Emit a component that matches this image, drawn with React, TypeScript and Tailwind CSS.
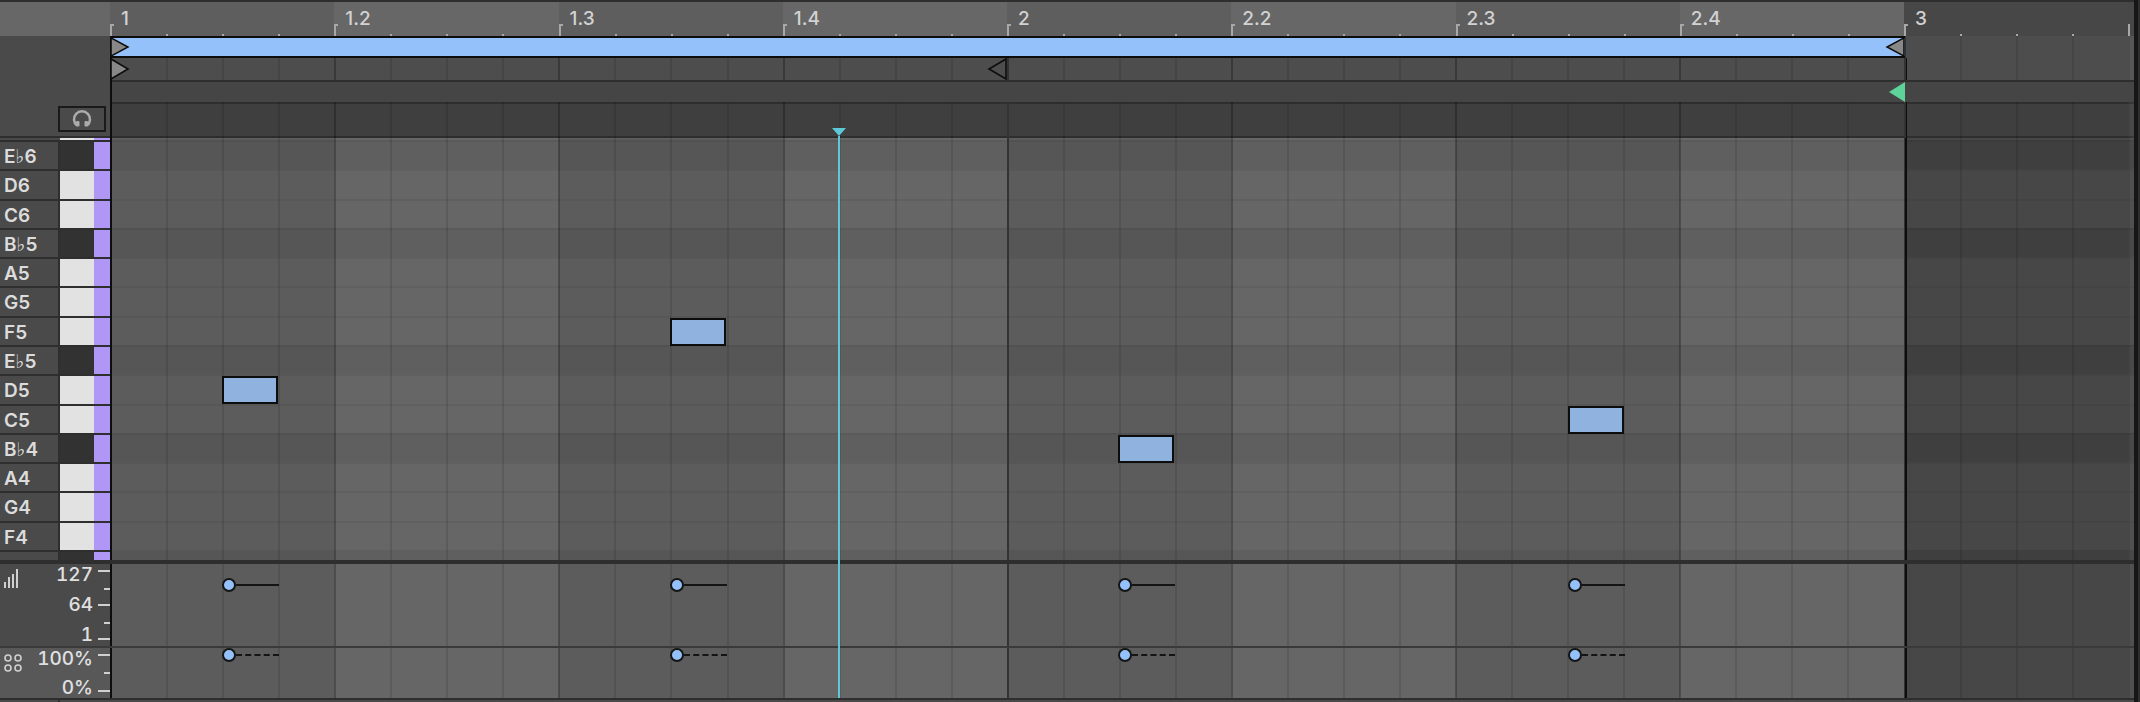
const pitches = [
  { name: "E♭6", black: true },
  { name: "D6", black: false },
  { name: "C6", black: false },
  { name: "B♭5", black: true },
  { name: "A5", black: false },
  { name: "G5", black: false },
  { name: "F5", black: false },
  { name: "E♭5", black: true },
  { name: "D5", black: false },
  { name: "C5", black: false },
  { name: "B♭4", black: true },
  { name: "A4", black: false },
  { name: "G4", black: false },
  { name: "F4", black: false },
];

// x is measured from the inside of the black edge at 112px
const notes = [
  { x: 110, row: 8 },
  { x: 558, row: 6 },
  { x: 1006, row: 10 },
  { x: 1456, row: 9 },
];

const markers = [
  { label: "1", bright: false },
  { label: "1.2", bright: true },
  { label: "1.3", bright: false },
  { label: "1.4", bright: true },
  { label: "2", bright: false },
  { label: "2.2", bright: true },
  { label: "2.3", bright: false },
  { label: "2.4", bright: true },
];

function Triangle({ dir, fill, className }: { dir: "right" | "left"; fill: string; className: string }) {
  return (
    <svg viewBox="0 0 20 22" preserveAspectRatio="none" className={className}>
      <path
        d={dir === "right" ? "M1 1 L18 11 L1 21 Z" : "M19 1 L2 11 L19 21 Z"}
        fill={fill}
        stroke="#0d0d0d"
        strokeWidth="1.6"
      />
    </svg>
  );
}

// beat shading sits under the rows, one band per 1/4 bar
function Bands({ light, dark, after, inset }: { light: string; dark: string; after: string; inset?: boolean }) {
  return (
    <div className="absolute inset-0 flex">
      {markers.map((m, i) => (
        <div
          key={m.label}
          className={`shrink-0 ${inset && i === 0 ? "w-[222.25px]" : "w-[224.25px]"} ${m.bright ? light : dark}`}
        />
      ))}
      <div className={`flex-1 ${after}`} />
    </div>
  );
}

function GridLines() {
  const cols = Array.from({ length: 37 }, (_, i) => i);
  return (
    <div className="pointer-events-none absolute inset-0 flex overflow-hidden">
      {cols.map((i) => (
        <div
          key={i}
          className={`h-full shrink-0 ${i === 0 ? "w-[54.06px]" : "w-[56.06px] border-l-2"} ${
            i === 36
              ? "border-black/10 bg-white/5"
              : i % 16 === 0
                ? "border-[#333333]"
                : i % 4 === 0
                  ? "border-black/25"
                  : "border-black/10"
          }`}
        />
      ))}
    </div>
  );
}

function Ruler() {
  return (
    <div className="flex h-[34px] shrink-0 bg-[#676767]">
      <div className="w-[110px] shrink-0" />
      <div className="relative flex flex-1">
        <Bands light="bg-[#676767]" dark="bg-[#5e5e5e]" after="bg-[#474747]" />
        {[...markers, { label: "3", bright: false }].map((m) => (
          <div key={m.label} className="relative flex w-[224.25px] shrink-0">
            {[0, 1, 2, 3].map((i) => (
              <div key={i} className="relative h-full w-[56.06px] shrink-0">
                <div
                  className={`absolute bottom-0 left-0 w-[2px] bg-[#a8a8a8] ${i === 0 ? "h-[12px]" : "h-[2px]"}`}
                />
                {i === 0 && <div className="absolute bottom-[10px] left-0 h-[2px] w-[4px] bg-[#a8a8a8]" />}
                {i === 0 && (
                  <span className="absolute top-[5px] left-[11px] text-[19px] leading-[24px] font-medium text-[#d2d2d2]">
                    {m.label}
                  </span>
                )}
              </div>
            ))}
          </div>
        ))}
        <div className="absolute right-[4px] bottom-0 h-[12px] w-[2px] bg-[#a8a8a8]" />
      </div>
    </div>
  );
}

function Header() {
  return (
    <div className="flex h-[102px] shrink-0">
      <div className="flex w-[110px] shrink-0 items-end justify-end border-b-2 border-[#2e2e2e] bg-[#4a4a4a] pr-[4px] pb-[4px]">
        <div className="flex h-[26px] w-[48px] items-center justify-center border-2 border-[#1a1a1a]">
          <svg viewBox="0 0 20 20" className="h-[20px] w-[20px]" fill="none">
            <path d="M5 16.5 A8 8 0 1 1 15 16.5" stroke="#ababab" strokeWidth="2.5" />
            <rect x="4" y="12" width="3.5" height="5.5" rx="1" fill="#ababab" />
            <rect x="12.5" y="12" width="3.5" height="5.5" rx="1" fill="#ababab" />
          </svg>
        </div>
      </div>
      <div className="relative flex-1 border-l-2 border-[#0d0d0d] bg-[#4d4d4d]">
        <div className="relative z-10 flex h-[22px] w-[1793px] items-center justify-between border-y-2 border-[#0d0d0d] bg-[#95c1fb]">
          <Triangle dir="right" fill="#888888" className="-ml-[2px] h-[20px] w-[20px]" />
          <Triangle dir="left" fill="#888888" className="h-[20px] w-[20px]" />
        </div>
        <div className="relative z-10 flex h-[22px] items-center">
          <Triangle dir="right" fill="#888888" className="-ml-[2px] h-[22px] w-[20px]" />
          <Triangle dir="left" fill="none" className="ml-[857px] h-[22px] w-[20px]" />
        </div>
        <div className="relative z-10 flex h-[22px] items-center border-t-2 border-[#2e2e2e] bg-[#454545] pl-[1777px]">
          <svg viewBox="0 0 16 20" className="h-[20px] w-[16px]">
            <path d="M0 10 L16 0 L16 20 Z" fill="#5dd39a" />
          </svg>
        </div>
        <div className="h-[36px] border-y-2 border-[#2e2e2e] bg-[#3f3f3f]" />
        <div className="absolute top-[22px] bottom-0 left-[1793px] w-[2px] bg-[#0d0d0d]" />
        <GridLines />
      </div>
    </div>
  );
}

function KeyLabels() {
  return (
    <div className="flex w-[110px] shrink-0 flex-col overflow-hidden">
      <div className="flex h-[2px] shrink-0">
        <div className="w-[60px] bg-[#4a4a4a]" />
        <div className="w-[34px] bg-[#e2e2e2]" />
        <div className="w-[16px] bg-[#b197f5]" />
      </div>
      {pitches.map((p) => (
        <div key={p.name} className="flex h-[29.29px] shrink-0 border-t-2 border-[#2e2e2e]">
          <span className="w-[58px] overflow-hidden bg-[#4a4a4a] pl-[4px] text-[19px] leading-[30px] font-semibold whitespace-nowrap text-[#dcdcdc]">
            {p.name}
          </span>
          <div className="w-[2px] bg-[#2e2e2e]" />
          <div className={`w-[34px] ${p.black ? "bg-[#323232]" : "bg-[#e2e2e2]"}`} />
          <div className="w-[16px] bg-[#b197f5]" />
        </div>
      ))}
      <div className="flex flex-1 border-t-2 border-[#2e2e2e]">
        <div className="w-[58px] bg-[#4a4a4a]" />
        <div className="w-[2px] bg-[#2e2e2e]" />
        <div className="w-[34px] bg-[#323232]" />
        <div className="w-[16px] bg-[#b197f5]" />
      </div>
    </div>
  );
}

function NoteGrid() {
  return (
    <div className="relative flex flex-1 flex-col overflow-hidden border-l-2 border-[#0d0d0d]">
      <div className="relative h-[2px] shrink-0">
        <Bands inset light="bg-[#666666]" dark="bg-[#5c5c5c]" after="bg-[#474747]" />
      </div>
      {pitches.map((p) => (
        <div key={p.name} className="relative h-[29.29px] shrink-0">
          <Bands
            inset
            light={p.black ? "bg-[#5f5f5f]" : "bg-[#666666]"}
            dark={p.black ? "bg-[#565656]" : "bg-[#5c5c5c]"}
            after={p.black ? "bg-[#3f3f3f]" : "bg-[#474747]"}
          />
          <div className="absolute inset-x-0 top-0 h-[2px] bg-black/5" />
        </div>
      ))}
      <div className="relative flex-1">
        <Bands inset light="bg-[#5f5f5f]" dark="bg-[#565656]" after="bg-[#3f3f3f]" />
      </div>
      <GridLines />
      {notes.map((n) => (
        <div
          key={n.x}
          style={{ left: n.x, top: 4 + n.row * 29.29 }}
          className="absolute h-[28px] w-[56px] border-2 border-[#0d0d0d] bg-[#8fb3de]"
        />
      ))}
      <div className="absolute top-0 bottom-0 left-[1793px] w-[2px] bg-[#0d0d0d]" />
    </div>
  );
}

function Ticks({ ticks }: { ticks: { y: number; long: boolean }[] }) {
  return (
    <>
      {ticks.map((t) => (
        <div
          key={t.y}
          style={{ top: t.y }}
          className={`absolute right-0 h-[2px] bg-[#d0d0d0] ${t.long ? "w-[12px]" : "w-[6px]"}`}
        />
      ))}
    </>
  );
}

function VelocityLane({ dashed, handleY }: { dashed: boolean; handleY: number }) {
  return (
    <div className="relative h-full flex-1 overflow-hidden border-l-2 border-[#0d0d0d]">
      <Bands inset light="bg-[#666666]" dark="bg-[#5c5c5c]" after="bg-[#474747]" />
      <GridLines />
      {notes.map((n) => (
        <div
          key={n.x}
          style={{ left: n.x, top: handleY - 7 }}
          className="absolute flex h-[14px] w-[57px] items-center"
        >
          <div className="h-[14px] w-[14px] shrink-0 rounded-full border-2 border-[#141414] bg-[#95c1fb]" />
          <div className={`h-0 flex-1 border-t-2 border-[#141414] ${dashed ? "border-dashed" : ""}`} />
        </div>
      ))}
      <div className="absolute top-0 bottom-0 left-[1793px] w-[2px] bg-[#0d0d0d]" />
    </div>
  );
}

export default function App() {
  return (
    <div
      className="relative flex h-[702px] w-[2140px] flex-col overflow-hidden bg-[#2e2e2e]"
      style={{ fontFamily: '"Inter", "DejaVu Sans", sans-serif' }}
    >
      <div className="h-[2px] shrink-0 bg-[#2e2e2e]" />
      <div className="flex min-w-0 flex-1 flex-col pr-[6px]">
        <Ruler />
        <Header />
        <div className="flex h-[422px] shrink-0">
          <KeyLabels />
          <NoteGrid />
        </div>
        <div className="h-[4px] shrink-0 bg-[#2e2e2e]" />
        <div className="flex h-[82px] shrink-0">
          <div className="relative w-[110px] shrink-0 bg-[#4a4a4a] text-[19px] font-medium text-[#e0e0e0] tabular-nums">
            <svg viewBox="0 0 14 19" className="absolute top-[5px] left-[4px] h-[19px] w-[14px]" stroke="#d0d0d0" strokeWidth="2">
              <path d="M1 19V13M5 19V8M9 19V5M13 19V0" />
            </svg>
            <span className="absolute top-[-1px] right-[17px] leading-[24px]">127</span>
            <span className="absolute top-[29px] right-[17px] leading-[24px]">64</span>
            <span className="absolute top-[59px] right-[17px] leading-[24px]">1</span>
            <Ticks
              ticks={[
                { y: 6, long: true },
                { y: 24, long: false },
                { y: 40, long: true },
                { y: 58, long: false },
                { y: 74, long: true },
              ]}
            />
          </div>
          <VelocityLane dashed={false} handleY={21} />
        </div>
        <div className="h-[2px] shrink-0 bg-[#3a3a3a]" />
        <div className="flex h-[50px] shrink-0">
          <div className="relative w-[110px] shrink-0 bg-[#585858] text-[19px] font-medium text-[#e0e0e0] tabular-nums">
            <svg viewBox="0 0 18 18" className="absolute top-[6px] left-[4px] h-[18px] w-[18px]" fill="none" stroke="#d0d0d0" strokeWidth="1.6">
              <circle cx="4" cy="4" r="3" />
              <circle cx="14" cy="4" r="3" />
              <circle cx="4" cy="14" r="3" />
              <circle cx="14" cy="14" r="3" />
            </svg>
            <span className="absolute top-[-1px] right-[17px] leading-[24px]">100%</span>
            <span className="absolute top-[28px] right-[17px] leading-[24px]">0%</span>
            <Ticks
              ticks={[
                { y: 6, long: true },
                { y: 24, long: false },
                { y: 42, long: true },
              ]}
            />
          </div>
          <VelocityLane dashed handleY={7} />
        </div>
        <div className="h-[2px] shrink-0 bg-[#2e2e2e]" />
        <div className="flex flex-1 bg-[#4a4a4a]">
          <div className="ml-[58px] w-[2px] bg-[#2e2e2e]" />
        </div>
      </div>
      {/* playhead spans the editor from the header down */}
      <div className="absolute top-[136px] bottom-[4px] left-[838px] w-[2px] bg-[#5cc8d8]" />
      <svg viewBox="0 0 14 8" className="absolute top-[128px] left-[832px] h-[8px] w-[14px]">
        <path d="M0 0 H14 L7 8 Z" fill="#5cc8d8" />
      </svg>
      <div className="absolute top-0 right-[2px] bottom-0 w-[4px] bg-[#161616]" />
    </div>
  );
}
